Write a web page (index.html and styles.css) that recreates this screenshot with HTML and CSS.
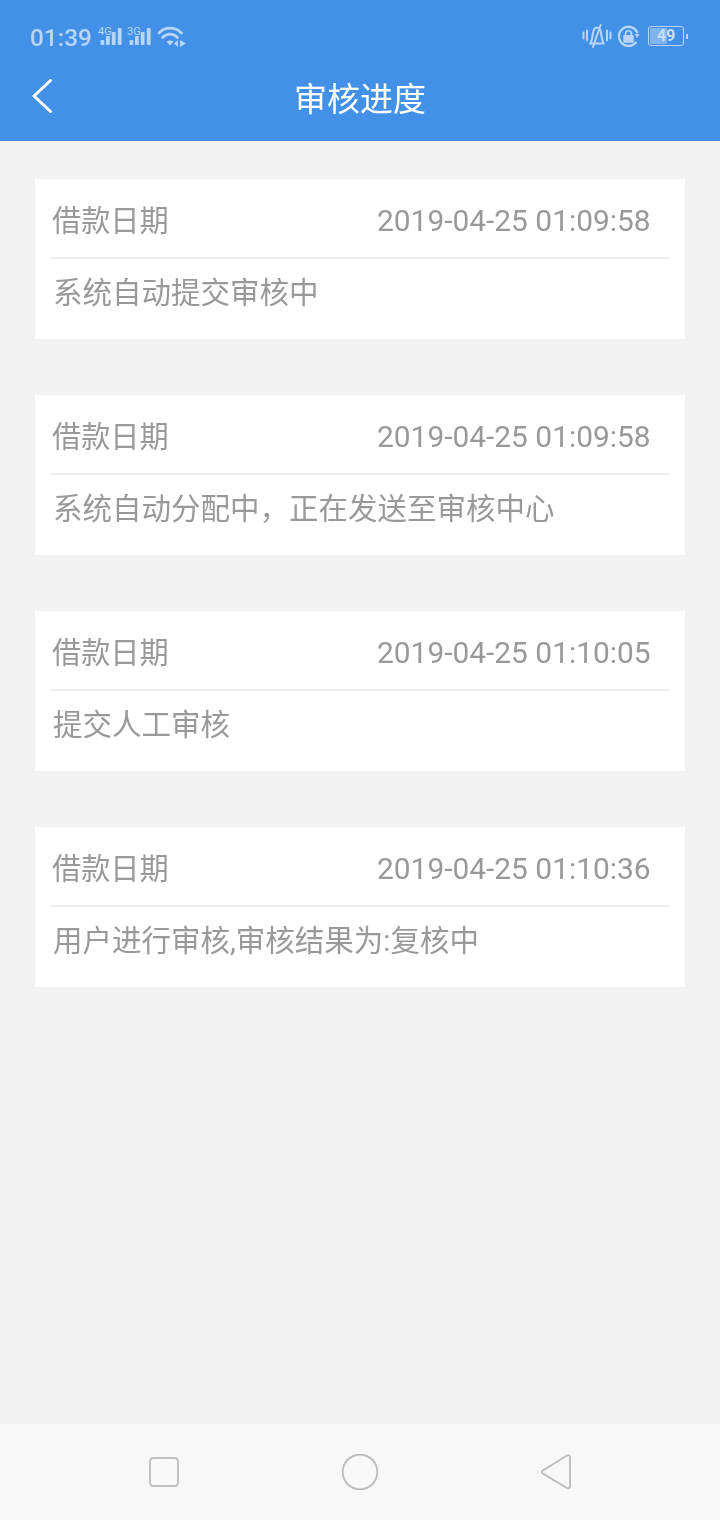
FILE: index.html
```html
<!DOCTYPE html>
<html lang="zh-CN">
<head>
<meta charset="utf-8">
<title>审核进度</title>
<link rel="stylesheet" href="styles.css">
</head>
<body>
<div class="app">
  <header class="header">
    <div class="status">
      <div class="status-left">
        <span class="time">01:39</span>
        <svg class="sig" width="24" height="22" viewBox="0 0 24 22">
          <text x="0" y="8.500" class="net">4G</text>
          <g fill="#b9d6f6"><rect x="2.500" y="14" width="3.800" height="5" rx="1"/><rect x="8" y="10" width="3.800" height="9" rx="1"/><rect x="13.800" y="6" width="3.800" height="13" rx="1"/><rect x="19.800" y="2" width="3.800" height="17" rx="1"/></g>
        </svg>
        <svg class="sig sig2" width="24" height="22" viewBox="0 0 24 22">
          <text x="0" y="8.500" class="net">3G</text>
          <g fill="#b9d6f6"><rect x="2.500" y="14" width="3.800" height="5" rx="1"/><rect x="8" y="10" width="3.800" height="9" rx="1"/><rect x="13.800" y="6" width="3.800" height="13" rx="1"/><rect x="19.800" y="2" width="3.800" height="17" rx="1"/></g>
        </svg>
        <svg class="wifi" width="30" height="24" viewBox="0 0 30 24">
          <g fill="none" stroke="#b9d6f6" stroke-width="2.600" stroke-linecap="round"><path d="M2 8C8 1.500 18 1.500 24.500 8"/><path d="M5.500 12.500C10 8 16 8 20.500 12.500"/></g>
          <path d="M9.500 16.500C11.500 15 14.500 15 16.500 16.500L13 20.500Z" fill="#b9d6f6"/>
          <path d="M21 15V22L17 18.500ZM23 15V22L29 18.500Z" fill="#b9d6f6"/>
        </svg>
      </div>
      <div class="status-right">
        <svg class="bell" width="30" height="26" viewBox="0 0 30 26">
          <g fill="none" stroke="#b9d6f6" stroke-linecap="round">
            <path stroke-width="2" d="M1.500 9.500V15.500M5 7.500V17.500M25 7.500V17.500M28.500 9.500V15.500"/>
            <path stroke-width="2" d="M8.500 20.500C10 17.500 10.500 13 11 10C11.500 6.500 13 4.500 15 4.500C17 4.500 18.500 6.500 19 10C19.500 13 20 17.500 21.500 20.500Z"/>
            <path stroke-width="2" d="M18.500 2L11 24"/>
          </g>
        </svg>
        <svg class="lock" width="23" height="23" viewBox="0 0 24 24">
          <path d="M19.500 18.500A10 10 0 1 1 21 7.500" fill="none" stroke="#b9d6f6" stroke-width="2.400" stroke-linecap="round"/>
          <path d="M18.500 9.500H23.500L21 13.500Z" fill="#b9d6f6"/>
          <rect x="6.500" y="10.500" width="11" height="8" rx="1" fill="#b9d6f6"/>
          <path d="M9 11V9A3 3 0 0 1 15 9V11" fill="none" stroke="#b9d6f6" stroke-width="1.800"/>
        </svg>
        <div class="battery">
          <div class="battery-body"><span class="battery-fill"></span><span class="battery-num">49</span></div>
          <span class="battery-tip"></span>
        </div>
      </div>
    </div>
    <div class="titlebar">
      <svg class="back" width="22" height="36" viewBox="0 0 22 36">
        <path d="M18.500 1.500L2 17L18.500 32.500" fill="none" stroke="#fff" stroke-width="3" stroke-linecap="round" stroke-linejoin="round"/>
      </svg>
      <h1 class="title">审核进度</h1>
    </div>
  </header>

  <main class="list">
    <section class="card">
      <div class="row"><span class="label">借款日期</span><span class="date">2019-04-25 01:09:58</span></div>
      <p class="desc">系统自动提交审核中</p>
    </section>
    <section class="card">
      <div class="row"><span class="label">借款日期</span><span class="date">2019-04-25 01:09:58</span></div>
      <p class="desc">系统自动分配中，正在发送至审核中心</p>
    </section>
    <section class="card">
      <div class="row"><span class="label">借款日期</span><span class="date">2019-04-25 01:10:05</span></div>
      <p class="desc">提交人工审核</p>
    </section>
    <section class="card">
      <div class="row"><span class="label">借款日期</span><span class="date">2019-04-25 01:10:36</span></div>
      <p class="desc">用户进行审核,审核结果为:复核中</p>
    </section>
  </main>

  <nav class="navbar">
    <svg width="32" height="32" viewBox="0 0 32 32"><rect x="2" y="2" width="28" height="28" rx="3.500" fill="none" stroke="#bfbfbf" stroke-width="2"/></svg>
    <svg width="38" height="38" viewBox="0 0 38 38"><circle cx="19" cy="19" r="17.300" fill="none" stroke="#bfbfbf" stroke-width="2"/></svg>
    <svg width="32" height="38" viewBox="0 0 32 38"><path d="M3 17.300L27 2.500Q30 1.500 30 4V33.500Q30 36 27 35L3 20.700Q0.800 19 3 17.300Z" fill="none" stroke="#bfbfbf" stroke-width="2" stroke-linejoin="round"/></svg>
  </nav>
</div>
</body>
</html>
```

FILE: styles.css
```css
* { box-sizing: border-box; margin: 0; padding: 0; }
html, body { width: 720px; height: 1520px; overflow: hidden; }
body { font-family: Roboto, "Noto Sans CJK SC", sans-serif; background: #f2f2f2; }
.app { width: 720px; height: 1520px; display: flex; flex-direction: column; }

.header { height: 141px; background: #4291e6; flex: none; }
.status { height: 74px; padding: 20px 32px 0 30px; display: flex; justify-content: space-between; align-items: flex-start; }
.status-left { display: flex; align-items: center; height: 34px; }
.time { font-size: 24.400px; font-weight: 500; color: #b9d6f6; line-height: 34px; padding-top: 1px; will-change: transform; }
.net { font: 400 11px Roboto, sans-serif; fill: #b9d6f6; }
.sig { margin-left: 6px; display: block; overflow: visible; }
.sig2 { margin-left: 5px; }
.wifi { margin-left: 6px; display: block; }
.status-right { display: flex; align-items: center; height: 32px; }
.bell, .lock { display: block; }
.lock { margin-left: 5px; }
.battery { display: flex; align-items: center; margin-left: 8px; }
.battery-body { position: relative; width: 36px; height: 20px; border: 1.500px solid #b9d6f6; border-radius: 3px; display: flex; align-items: center; justify-content: center; overflow: hidden; }
.battery-fill { position: absolute; left: 1px; top: 1px; bottom: 1px; width: 17px; background: #7fb4ee; }
.battery-num { position: relative; font-size: 16px; font-weight: 700; color: #c9e0f8; line-height: 16px; will-change: transform; }
.battery-tip { width: 2px; height: 5px; margin-left: 2px; background: #b9d6f6; }

.titlebar { position: relative; height: 48px; display: flex; align-items: center; justify-content: center; }
.back { position: absolute; left: 32px; top: 5px; }
.title { font-size: 33px; font-weight: 400; color: #fff; line-height: 52px; padding-top: 4px; will-change: transform; }

.list { flex: 1; padding: 38px 35px 0; display: flex; flex-direction: column; gap: 56px; }
.card { height: 160px; background: #fff; padding: 0 16px; }
.row { height: 80px; padding: 6px 18px 0 1px; border-bottom: 2px solid #ececec; display: flex; justify-content: space-between; align-items: center; color: #999; }
.label { font-size: 29.200px; line-height: 74px; will-change: transform; }
.date { font-size: 29.900px; line-height: 72px; will-change: transform; }
.desc { padding: 0 0 0 2px; font-size: 29.500px; line-height: 68px; color: #999; will-change: transform; }

.navbar { height: 96px; flex: none; background: #f8f8f8; padding: 0 148px; display: flex; justify-content: space-between; align-items: center; }
```
